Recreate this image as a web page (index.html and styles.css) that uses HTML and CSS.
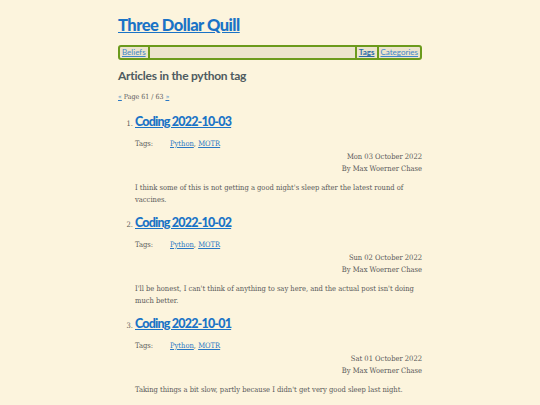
FILE: index.html
```html
<!DOCTYPE html>
<html>
<head>
<meta charset="utf-8">
<link rel="stylesheet" href="styles.css">
</head>
<body>
<div class="page">
  <h1 class="site-title"><a href="#">Three Dollar Quill</a></h1>
  <nav class="nav">
    <a class="nav-item" href="#">Beliefs</a>
    <span class="nav-spacer"></span>
    <a class="nav-item nav-current" href="#">Tags</a>
    <a class="nav-item" href="#">Categories</a>
  </nav>
  <h2 class="section-title">Articles in the python tag</h2>
  <p class="pager"><a href="#">«</a> Page 61 / 63 <a href="#">»</a></p>
  <ol class="articles">
    <li class="article">
      <h3 class="article-title"><a href="#">Coding 2022-10-03</a></h3>
      <div class="tags"><span class="tags-label">Tags:</span><span><a href="#">Python</a>, <a href="#">MOTR</a></span></div>
      <div class="meta">Mon 03 October 2022<br>By Max Woerner Chase</div>
      <p class="summary">I think some of this is not getting a good night's sleep after the latest round of vaccines.</p>
    </li>
    <li class="article">
      <h3 class="article-title"><a href="#">Coding 2022-10-02</a></h3>
      <div class="tags"><span class="tags-label">Tags:</span><span><a href="#">Python</a>, <a href="#">MOTR</a></span></div>
      <div class="meta">Sun 02 October 2022<br>By Max Woerner Chase</div>
      <p class="summary">I'll be honest, I can't think of anything to say here, and the actual post isn't doing much better.</p>
    </li>
    <li class="article">
      <h3 class="article-title"><a href="#">Coding 2022-10-01</a></h3>
      <div class="tags"><span class="tags-label">Tags:</span><span><a href="#">Python</a>, <a href="#">MOTR</a></span></div>
      <div class="meta">Sat 01 October 2022<br>By Max Woerner Chase</div>
      <p class="summary">Taking things a bit slow, partly because I didn't get very good sleep last night.</p>
    </li>
  </ol>
</div>
</body>
</html>
```

FILE: styles.css
```css
html, body {
  margin: 0;
  padding: 0;
  background: #fcf4dd;
}
body {
  font-family: "DejaVu Serif Condensed", "DejaVu Serif", serif;
  color: #5a5a5a;
  font-size: 7.5px;
}
a {
  color: #2a78c4;
}
.page {
  width: 304px;
  margin: 0 auto;
  padding-top: 14px;
}
.site-title {
  margin: 0;
  font-family: Lato, sans-serif;
  font-size: 16.5px;
  font-weight: 900;
  letter-spacing: -0.5px;
  line-height: 22px;
}
.site-title a {
  color: #1a73c6;
}
.nav {
  margin-top: 9px;
  display: flex;
  align-items: stretch;
  border: 2px solid #6b9a1c;
  border-radius: 3px;
  background: #ece4cd;
  height: 11px;
  font-family: Lato, sans-serif;
  font-size: 8px;
  line-height: 11px;
}
.nav-item {
  padding: 0 2px;
  color: #3f86c8;
}
.nav-item:first-child {
  border-right: 2px solid #6b9a1c;
}
.nav-spacer {
  flex: 1;
}
.nav-current {
  font-weight: 700;
  color: #2a6aa8;
  border-left: 2px solid #6b9a1c;
}
.nav-current + .nav-item {
  border-left: 2px solid #6b9a1c;
}
.section-title {
  margin: 8px 0 0;
  font-family: Lato, sans-serif;
  font-size: 12px;
  font-weight: 700;
  letter-spacing: -0.25px;
  color: #4e5b60;
  line-height: 16px;
}
.pager {
  margin: 8px 0 0;
  font-size: 7px;
  line-height: 10px;
}
.articles {
  margin: 11px 0 0;
  padding-left: 17px;
}
.article {
  font-size: 7.5px;
}
.article-title {
  margin: 0;
  font-family: Lato, sans-serif;
  font-size: 12.5px;
  font-weight: 900;
  letter-spacing: -0.8px;
  line-height: 18px;
}
.article-title a {
  color: #1a73c6;
}
.tags {
  margin-top: 7px;
  margin-bottom: 1px;
  display: flex;
  line-height: 12px;
}
.tags-label {
  width: 35px;
}
.meta {
  text-align: right;
  line-height: 12px;
}
.summary {
  margin: 7px 0 8px;
  line-height: 12px;
}
```
